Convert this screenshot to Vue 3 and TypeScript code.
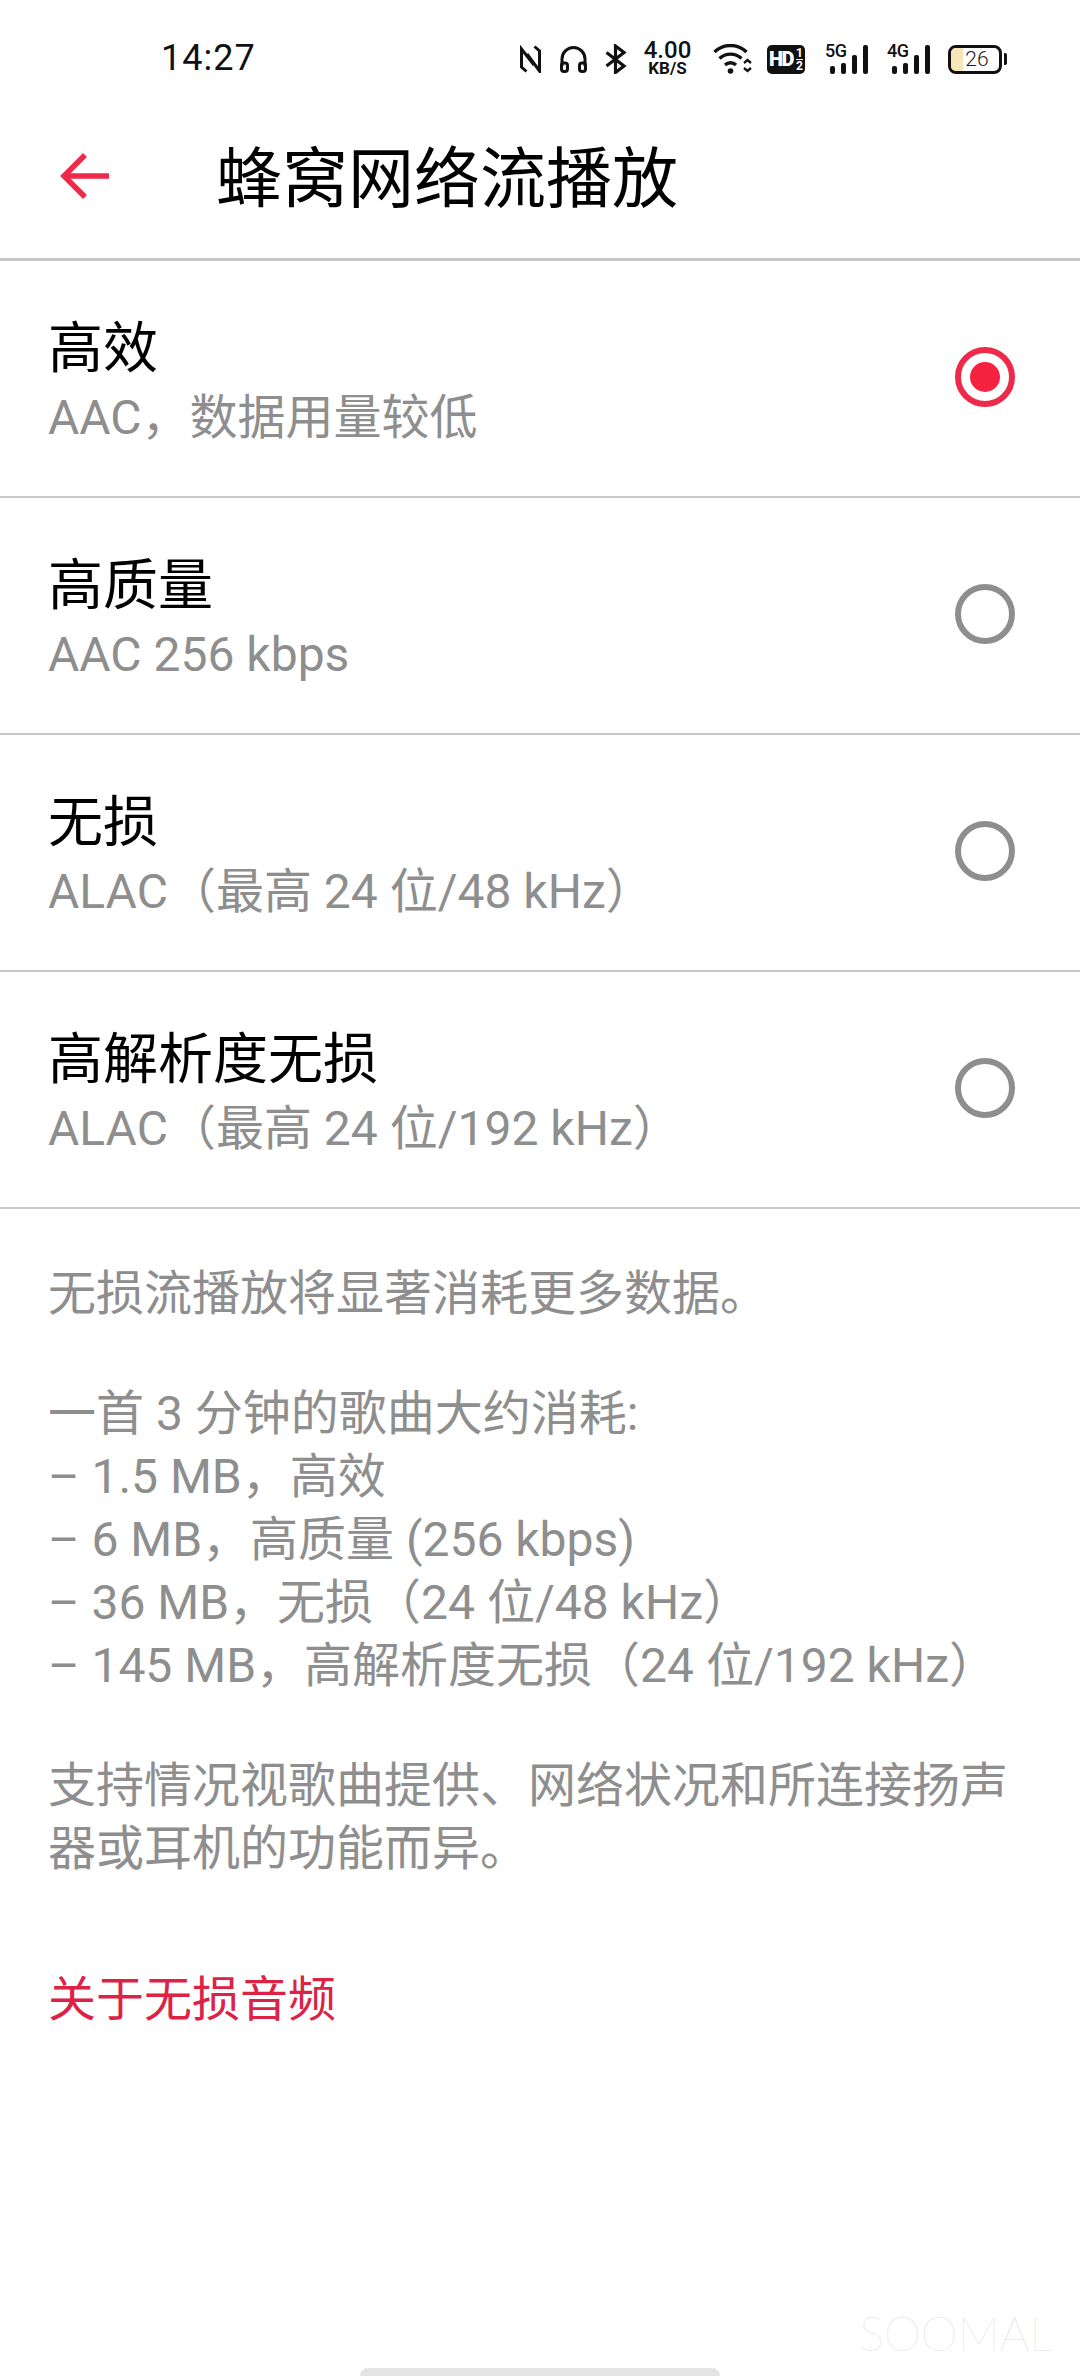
<script setup lang="ts">
import { ref } from 'vue'

interface Option {
  title: string
  sub: string
}

// full-width punctuation, as in the Chinese UI strings
const comma = '\uFF0C'
const open = '\uFF08'
const close = '\uFF09'

const options: Option[] = [
  { title: '高效', sub: `AAC${comma}数据用量较低` },
  { title: '高质量', sub: 'AAC 256 kbps' },
  { title: '无损', sub: `ALAC${open}最高 24 位/48 kHz${close}` },
  { title: '高解析度无损', sub: `ALAC${open}最高 24 位/192 kHz${close}` },
]

const sizes: string[] = [
  '一首 3 分钟的歌曲大约消耗:',
  `– 1.5 MB${comma}高效`,
  `– 6 MB${comma}高质量 (256 kbps)`,
  `– 36 MB${comma}无损${open}24 位/48 kHz${close}`,
  `– 145 MB${comma}高解析度无损${open}24 位/192 kHz${close}`,
]

const selected = ref(0)
const signal = [8, 11, 19, 29]
</script>

<template>
  <div class="page">
    <div class="status">
      <span class="time">14:27</span>
      <div class="status-icons">
        <svg width="23" height="28" viewBox="0 0 23 28" fill="none" stroke="#111" stroke-width="3">
          <path d="M7.5 26.5 L2.5 22 V4 L15 20" />
          <path d="M15.5 1.5 L20.5 6 V26 L8 9" />
        </svg>
        <svg class="ic-head" width="29" height="27" viewBox="0 0 29 27" fill="none" stroke="#111" stroke-width="3">
          <path d="M3 20 V13 a11.5 11.5 0 0 1 23 0 V20" />
          <rect x="2.5" y="17" width="6" height="8.5" rx="2.5" />
          <rect x="20.5" y="17" width="6" height="8.5" rx="2.5" />
        </svg>
        <svg class="ic-bt" width="22" height="30" viewBox="0 0 22 30" fill="none" stroke="#111" stroke-width="3.2">
          <path d="M1.5 8.5 L19 22 L10.5 28.5 V2 L19 8.5 L1.5 22" />
        </svg>
        <div class="speed">
          <span class="speed-num">4.00</span>
          <span class="speed-unit">KB/S</span>
        </div>
        <svg class="ic-wifi" width="40" height="30" viewBox="0 0 40 30" fill="none" stroke="#111" stroke-width="3.4">
          <path d="M1.5 8 a23 23 0 0 1 32 0" />
          <path d="M6.5 14.5 a16 16 0 0 1 22 0" />
          <path d="M12 21 a8 8 0 0 1 11 0" />
          <circle cx="17.5" cy="27" r="2.8" fill="#111" stroke="none" />
          <path d="M31 19 l3.5 -3 l3.5 3 M31 24 l3.5 3 l3.5 -3" stroke-width="2.4" />
        </svg>
        <div class="hd"><span>HD</span><span class="hd-nums"><i class="hd-top">1</i><i>2</i></span></div>
        <div class="net">
          <span class="net-label">5G</span>
          <div class="bars">
            <b v-for="(h, i) in signal" :key="i" :style="{ height: h + 'px' }"></b>
          </div>
        </div>
        <div class="net">
          <span class="net-label">4G</span>
          <div class="bars">
            <b v-for="(h, i) in signal" :key="i" :style="{ height: h + 'px' }"></b>
          </div>
        </div>
        <div class="battery">
          <div class="battery-body">
            <div class="battery-fill"></div>
            <span class="battery-num">26</span>
          </div>
          <div class="battery-cap"></div>
        </div>
      </div>
    </div>

    <header class="header">
      <svg class="back" width="49" height="46" viewBox="0 0 49 46" fill="none" stroke="#ee2a4a" stroke-width="5.5">
        <path d="M49 23 H4" />
        <path d="M25 2 L4 23 L25 44" />
      </svg>
      <h1 class="title">蜂窝网络流播放</h1>
    </header>

    <ul class="list">
      <li v-for="(o, i) in options" :key="o.title" class="row" @click="selected = i">
        <div class="row-text">
          <div class="row-title">{{ o.title }}</div>
          <div class="row-sub">{{ o.sub }}</div>
        </div>
        <span class="radio" :class="{ on: selected === i }"></span>
      </li>
    </ul>

    <section class="notes">
      <p>无损流播放将显著消耗更多数据。</p>
      <p>
        <span v-for="line in sizes" :key="line" class="line">{{ line }}</span>
      </p>
      <p>支持情况视歌曲提供、网络状况和所连接扬声器或耳机的功能而异。</p>
    </section>

    <a class="link">关于无损音频</a>

    <div class="home-bar"></div>
    <span class="watermark">SOOMAL</span>
  </div>
</template>

<style scoped>
.page {
  position: relative;
  width: 1080px;
  height: 2376px;
  display: flex;
  flex-direction: column;
  overflow: hidden;
  background: #fff;
  font-family: Roboto, "Noto Sans CJK SC", sans-serif;
}
.status {
  height: 100px;
  padding: 18px 73px 0 161px;
  box-sizing: border-box;
  display: flex;
  align-items: center;
  justify-content: space-between;
  flex-shrink: 0;
}
.time {
  margin-top: -3px;
  font-size: 36px;
  color: #111;
  letter-spacing: 1px;
}
.status-icons {
  display: flex;
  align-items: center;
  color: #111;
}
.ic-head {
  margin-left: 17px;
}
.ic-bt {
  margin-left: 17px;
}
.speed {
  margin-left: 15px;
  width: 51px;
  display: flex;
  flex-direction: column;
  align-items: center;
}
.speed-num {
  font-size: 24px;
  font-weight: 500;
  line-height: 19px;
}
.speed-unit {
  font-size: 17px;
  font-weight: 700;
  line-height: 17px;
}
.ic-wifi {
  margin-left: 20px;
}
.hd {
  margin-left: 14px;
  width: 38px;
  height: 29px;
  border-radius: 5px;
  background: #111;
  color: #fff;
  display: flex;
  align-items: center;
  justify-content: center;
  font-size: 20px;
  font-weight: 900;
  letter-spacing: -1.5px;
}
.hd-nums {
  display: flex;
  flex-direction: column;
  align-items: center;
  font-size: 12px;
  line-height: 12px;
  font-weight: 700;
  margin-left: 3px;
  letter-spacing: 0;
}
.hd-nums i {
  font-style: normal;
}
.hd-top {
  border-bottom: 1px solid #fff;
}
.net {
  position: relative;
  margin-left: 20px;
  width: 43px;
  height: 30px;
}
.net + .net {
  margin-left: 19px;
}
.net-label {
  position: absolute;
  left: 0;
  top: -1px;
  font-size: 18px;
  font-weight: 500;
  line-height: 15px;
  letter-spacing: -0.5px;
}
.bars {
  position: absolute;
  right: 0;
  bottom: 0;
  display: flex;
  align-items: flex-end;
  gap: 6px;
}
.bars b {
  display: block;
  width: 5px;
  border-radius: 2px;
  background: #111;
}
.battery {
  margin-left: 18px;
  display: flex;
  align-items: center;
  gap: 2px;
}
.battery-body {
  position: relative;
  width: 54px;
  height: 29px;
  box-sizing: border-box;
  border: 3px solid #111;
  border-radius: 8px;
  overflow: hidden;
  display: flex;
  align-items: center;
  justify-content: center;
}
.battery-fill {
  position: absolute;
  left: 0;
  top: 0;
  bottom: 0;
  width: 12px;
  background: #f7e7b8;
}
.battery-num {
  position: relative;
  margin-left: 4px;
  font-size: 21px;
  font-weight: 300;
  line-height: 21px;
  color: #222;
}
.battery-cap {
  width: 3px;
  height: 12px;
  background: #111;
  border-radius: 0 2px 2px 0;
}
.header {
  height: 161px;
  flex-shrink: 0;
  display: flex;
  align-items: center;
  padding-left: 60px;
  box-sizing: border-box;
  border-bottom: 3px solid #c8c8c8;
}
.back {
  flex-shrink: 0;
  margin-bottom: 6px;
}
.title {
  margin: 2px 0 0 107px;
  font-size: 66px;
  font-weight: 400;
  color: #000;
  line-height: 80px;
}
.list {
  list-style: none;
  margin: 0;
  padding: 0;
}
.row {
  height: 237px;
  box-sizing: border-box;
  padding: 0 65px 0 48px;
  display: flex;
  align-items: center;
  justify-content: space-between;
  border-bottom: 2px solid #c8c8c8;
}
.row-text {
  padding-top: 6px;
}
.row-title {
  font-size: 55px;
  line-height: 72px;
  color: #000;
}
.row-sub {
  font-size: 48px;
  line-height: 68px;
  color: #8e8e8e;
}
.radio {
  width: 60px;
  height: 60px;
  margin-bottom: 3px;
  box-sizing: border-box;
  border: 6px solid #8e8e8e;
  border-radius: 50%;
  display: flex;
  align-items: center;
  justify-content: center;
}
.radio.on {
  border-color: #ee2a4a;
}
.radio.on::after {
  content: "";
  width: 30px;
  height: 30px;
  border-radius: 50%;
  background: #f5233f;
}
.notes {
  padding: 53px 48px 0;
  font-size: 48px;
  line-height: 63px;
  color: #8e8e8e;
}
.notes p {
  margin: 0 0 57px;
}
.line {
  display: block;
}
.link {
  display: block;
  margin: 31px 0 0 48px;
  font-size: 48px;
  line-height: 63px;
  color: #dc2346;
}
.home-bar {
  margin: auto auto 0;
  width: 360px;
  height: 8px;
  border-radius: 8px 8px 0 0;
  background: #e4e4e4;
}
.watermark {
  position: absolute;
  right: 27px;
  top: 2303px;
  font-family: Lato, sans-serif;
  font-weight: 100;
  font-size: 47px;
  line-height: 60px;
  color: #e0e0e0;
}
</style>

<style>
html,
body {
  background: #fff;
}
</style>
